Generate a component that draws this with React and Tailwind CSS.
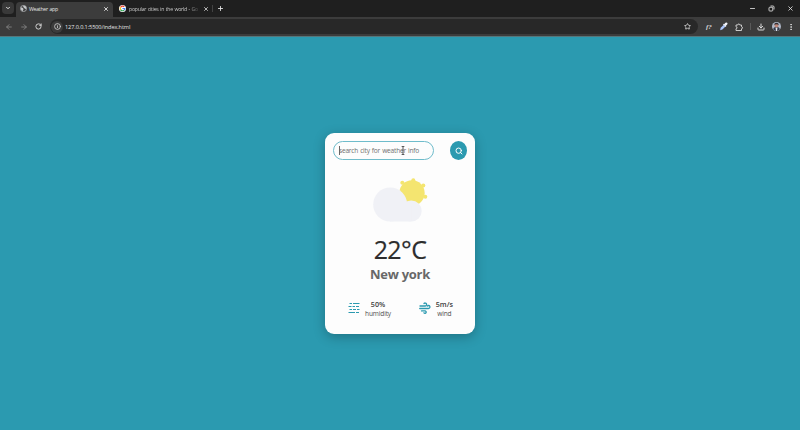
import React from "react";
import { Search, X, Plus, ChevronDown, ArrowLeft, ArrowRight, RotateCw, Info, Star, Download, Minus, EllipsisVertical } from "lucide-react";

function Globe() {
  return (
    <svg viewBox="0 0 16 16" className="size-[7px] shrink-0">
      <circle cx="8" cy="8" r="7" fill="#3c3c3c" stroke="#c3c6c8" strokeWidth="1.6" />
      <path d="M2 5l5 2 1 3-2 4-4-4zM8 1l5 2 2 5-3 1-3-3-2-2z" fill="#c3c6c8" />
    </svg>
  );
}

function GoogleLogo() {
  return (
    <svg viewBox="0 0 20 20" className="size-[7px] shrink-0">
      <circle cx="10" cy="10" r="10" fill="#fff" />
      <g fill="none" strokeWidth="3.4">
        <path d="M15 5.5A6.5 6.5 0 0 0 4.5 6.8" stroke="#ea4335" />
        <path d="M4.5 6.8a6.5 6.5 0 0 0 0 6.4" stroke="#fbbc05" />
        <path d="M4.5 13.2A6.5 6.5 0 0 0 14.5 14.8" stroke="#34a853" />
        <path d="M14.5 14.8A6.5 6.5 0 0 0 16.6 10H10" stroke="#4285f4" />
      </g>
    </svg>
  );
}

function TabStrip() {
  return (
    <div className="flex h-[17px] items-end bg-[#1f1f1f] text-[#e6e6e6]">
      <div className="mb-[3px] ml-[2px] flex h-[12px] w-[12px] items-center justify-center rounded-[4px] bg-[#393939]">
        <ChevronDown className="size-[6px]" strokeWidth={4} />
      </div>
      <div className="ml-[2px] flex h-[15px] w-[97px] items-center rounded-t-[4px] bg-[#3c3c3c] pb-[2px] pl-[4px] pr-[4px]">
        <Globe />
        <span className="ml-[2px] flex-1 whitespace-nowrap text-[5.2px] font-medium leading-[8px] tracking-[-0.26px] [word-spacing:0.5px]">Weather app</span>
        <X className="size-[6px]" strokeWidth={3.5} />
      </div>
      <div className="flex h-[15px] w-[99px] items-center pb-[2px] pl-[6px] pr-[3px]">
        <GoogleLogo />
        <span className="ml-[3px] whitespace-nowrap bg-linear-to-r from-[#dcdcdc] from-85% to-[#4a4a4a] bg-clip-text text-[5.2px] leading-[8px] tracking-[-0.26px] text-transparent [word-spacing:0.5px]">popular cities in the world - Go</span>
        <X className="ml-auto size-[6px]" strokeWidth={3} />
      </div>
      <div className="mb-[5px] h-[7px] w-px bg-[#424242]" />
      <Plus className="mb-[5px] ml-[4px] size-[7px]" strokeWidth={3} />
      <div className="mb-[5px] ml-auto mr-[6px] flex items-center gap-[12px]">
        <Minus className="size-[7px]" strokeWidth={2.8} />
        <svg viewBox="0 0 14 14" className="size-[7px]" fill="none" stroke="currentColor" strokeWidth="1.7">
          <rect x="2" y="4.5" width="7.5" height="7.5" rx="1.5" />
          <path d="M5 2h5a2 2 0 0 1 2 2v5" />
        </svg>
        <X className="size-[7px]" strokeWidth={2.8} />
      </div>
    </div>
  );
}

function Toolbar() {
  return (
    <div className="flex h-[20px] items-center border-b border-[#56777c] bg-[#3c3c3c] text-[#dadada]">
      <ArrowLeft className="ml-[5px] size-[8px] text-[#858585]" strokeWidth={2.6} />
      <ArrowRight className="ml-[7px] size-[8px] text-[#858585]" strokeWidth={2.6} />
      <RotateCw className="ml-[7px] size-[7px]" strokeWidth={3.2} />
      <div className="ml-[8px] flex h-[15px] w-[648px] items-center rounded-full bg-[#282828] pl-[1px] pr-[7px]">
        <div className="flex size-[12px] items-center justify-center rounded-full bg-[#3c3c3c]">
          <Info className="size-[7px]" strokeWidth={2.6} />
        </div>
        <span className="ml-[2px] whitespace-nowrap text-[5.6px] leading-[8px] tracking-[-0.1px] text-[#e4e6e7]">127.0.0.1:5500/index.html</span>
        <Star className="ml-auto size-[7px]" strokeWidth={2.8} />
      </div>
      <span className="ml-[8px] w-[7px] font-['Liberation_Serif',serif] text-[7px] font-bold italic leading-[8px]">f?</span>
      <svg viewBox="0 0 16 16" className="ml-[6px] size-[9px]">
        <path d="M2 14.5l1-4.5 5.5-5 3 3-5.5 5.5z" fill="#a9c4fb" />
        <path d="M7 4l5 5 1-1-1-1 2.500-2.500a2.100 2.100 0 0 0-3-3L9 4 8 3z" fill="#f0f3fa" />
      </svg>
      <svg viewBox="0 0 16 16" className="ml-[7px] size-[8px]" fill="none" stroke="currentColor" strokeWidth="1.8">
        <path d="M2 4h3.500a2 2 0 1 1 4 0H13v3.500a2 2 0 1 1 0 4V15H2v-3.500a2 2 0 1 0 0-4z" />
      </svg>
      <div className="ml-[7px] h-[7px] w-px bg-[#5a5a5a]" />
      <Download className="ml-[6px] size-[8px]" strokeWidth={3} />
      <svg viewBox="0 0 18 18" className="ml-[7px] size-[9px]">
        <circle cx="9" cy="9" r="9" fill="#aeb6c6" />
        <path d="M2.500 15c0-4 3-5 6.500-5s6.500 1 6.500 5a9 9 0 0 1-13 0z" fill="#32394a" />
        <path d="M7 11h4l-1 7H8z" fill="#dfe3ea" />
        <circle cx="9" cy="7" r="4" fill="#bd8577" />
        <path d="M4.500 6c0-6 9-6 9 0-2-2-7-2-9 0z" fill="#302c31" />
      </svg>
      <EllipsisVertical className="ml-[6px] size-[8px]" strokeWidth={2.8} />
    </div>
  );
}

function CloudSun() {
  return (
    <svg viewBox="0 0 56 44" className="mx-auto h-[44px] w-[56px] translate-x-px">
      <g fill="#f4e570" stroke="#f4e570">
        <circle cx="39" cy="15" r="12.7" stroke="none" />
        <g stroke="none">
          <circle cx="40.300" cy="2.300" r="2" />
          <circle cx="50.300" cy="7.500" r="2" />
          <circle cx="52.300" cy="18.800" r="2" />
          <circle cx="29.300" cy="4.800" r="2" />
        </g>
      </g>
      <g fill="#f0f1f6">
        <circle cx="17.200" cy="26.500" r="17" />
        <circle cx="38.200" cy="33" r="10.500" />
        <rect x="17" y="28" width="21.200" height="15.500" />
      </g>
    </svg>
  );
}

function HumidityIcon() {
  return (
    <svg viewBox="0 0 24 24" className="h-[12px] w-[12px] -translate-y-px" fill="none" stroke="#2b9ab0" strokeWidth="2.2">
      <path d="M3 3h5M10 3h13M1 9h6M9 9h5M16 9h6M3 15h5M10 15h6M18 15h5M1 21h13M16 21h6" />
    </svg>
  );
}

function WindIcon() {
  return (
    <svg viewBox="0 0 24 24" className="h-[12px] w-[12px] -translate-y-px" fill="none" stroke="#2b9ab0" strokeWidth="2.6" strokeLinecap="round">
      <path d="M2 8h10.500a3 3 0 1 0-2.500-5" />
      <path d="M1.500 13h17.500a3 3 0 1 0-2.500-4.800" />
      <path d="M5 17.800h7a2.400 2.400 0 1 1-2 3.800" />
    </svg>
  );
}

function Stat({ icon, value, label }) {
  return (
    <div className="flex items-center gap-[5px]">
      {icon}
      <div className="text-center leading-[10px] text-[#505050]">
        <p className="text-[7.2px] font-semibold text-[#404040]">{value}</p>
        <p className="text-[6.6px] tracking-[-0.15px]">{label}</p>
      </div>
    </div>
  );
}

function WeatherCard() {
  return (
    <section className="flex h-[201px] w-[150px] flex-col rounded-[9px] bg-[#fdfdfd] px-[8px] pt-[8px] shadow-[0_3px_12px_rgba(0,0,0,0.25)]">
      <div className="flex h-[19px] justify-between">
        <div className="relative flex w-[101px] items-center rounded-full border border-[#6fbccb] pl-[5px]">
          <span className="whitespace-nowrap text-[6.6px] leading-[10px] tracking-[-0.22px] text-[#707070] [word-spacing:0.6px]">search city for weather info</span>
          <span className="absolute left-[5px] top-[4px] h-[9px] w-px bg-[#666]" />
          <svg viewBox="0 0 6 10" className="absolute left-[66px] top-[4px] h-[9px] w-[6px]" fill="none" stroke="#444" strokeWidth="1">
            <path d="M1.500 .5h3M3 .5v9M1.500 9.500h3" />
          </svg>
        </div>
        <button className="flex w-[17px] items-center justify-center rounded-[50%] bg-[#2b9ab0] text-white">
          <Search className="size-[8px]" strokeWidth={2.9} />
        </button>
      </div>
      <div className="mt-[18px]">
        <CloudSun />
      </div>
      <p className="mt-[12px] text-center text-[25px] font-medium leading-[30px] tracking-[-0.6px] text-[#2d2d2d] [-webkit-text-stroke:0.2px_#2d2d2d]">22°C</p>
      <p className="mt-[1px] text-center text-[13px] font-bold leading-[18px] tracking-[-0.25px] text-[#686868]">New york</p>
      <div className="mt-[16px] flex justify-between pl-[15px] pr-[14px]">
        <Stat icon={<HumidityIcon />} value="50%" label="humidity" />
        <Stat icon={<WindIcon />} value="5m/s" label="wind" />
      </div>
    </section>
  );
}

export default function App() {
  return (
    <div className="flex h-[430px] w-[800px] flex-col overflow-hidden bg-[#2b9ab0] font-['Open_Sans','Noto_Sans',sans-serif]">
      <TabStrip />
      <Toolbar />
      <main className="flex flex-1 items-center justify-center">
        <WeatherCard />
      </main>
    </div>
  );
}
